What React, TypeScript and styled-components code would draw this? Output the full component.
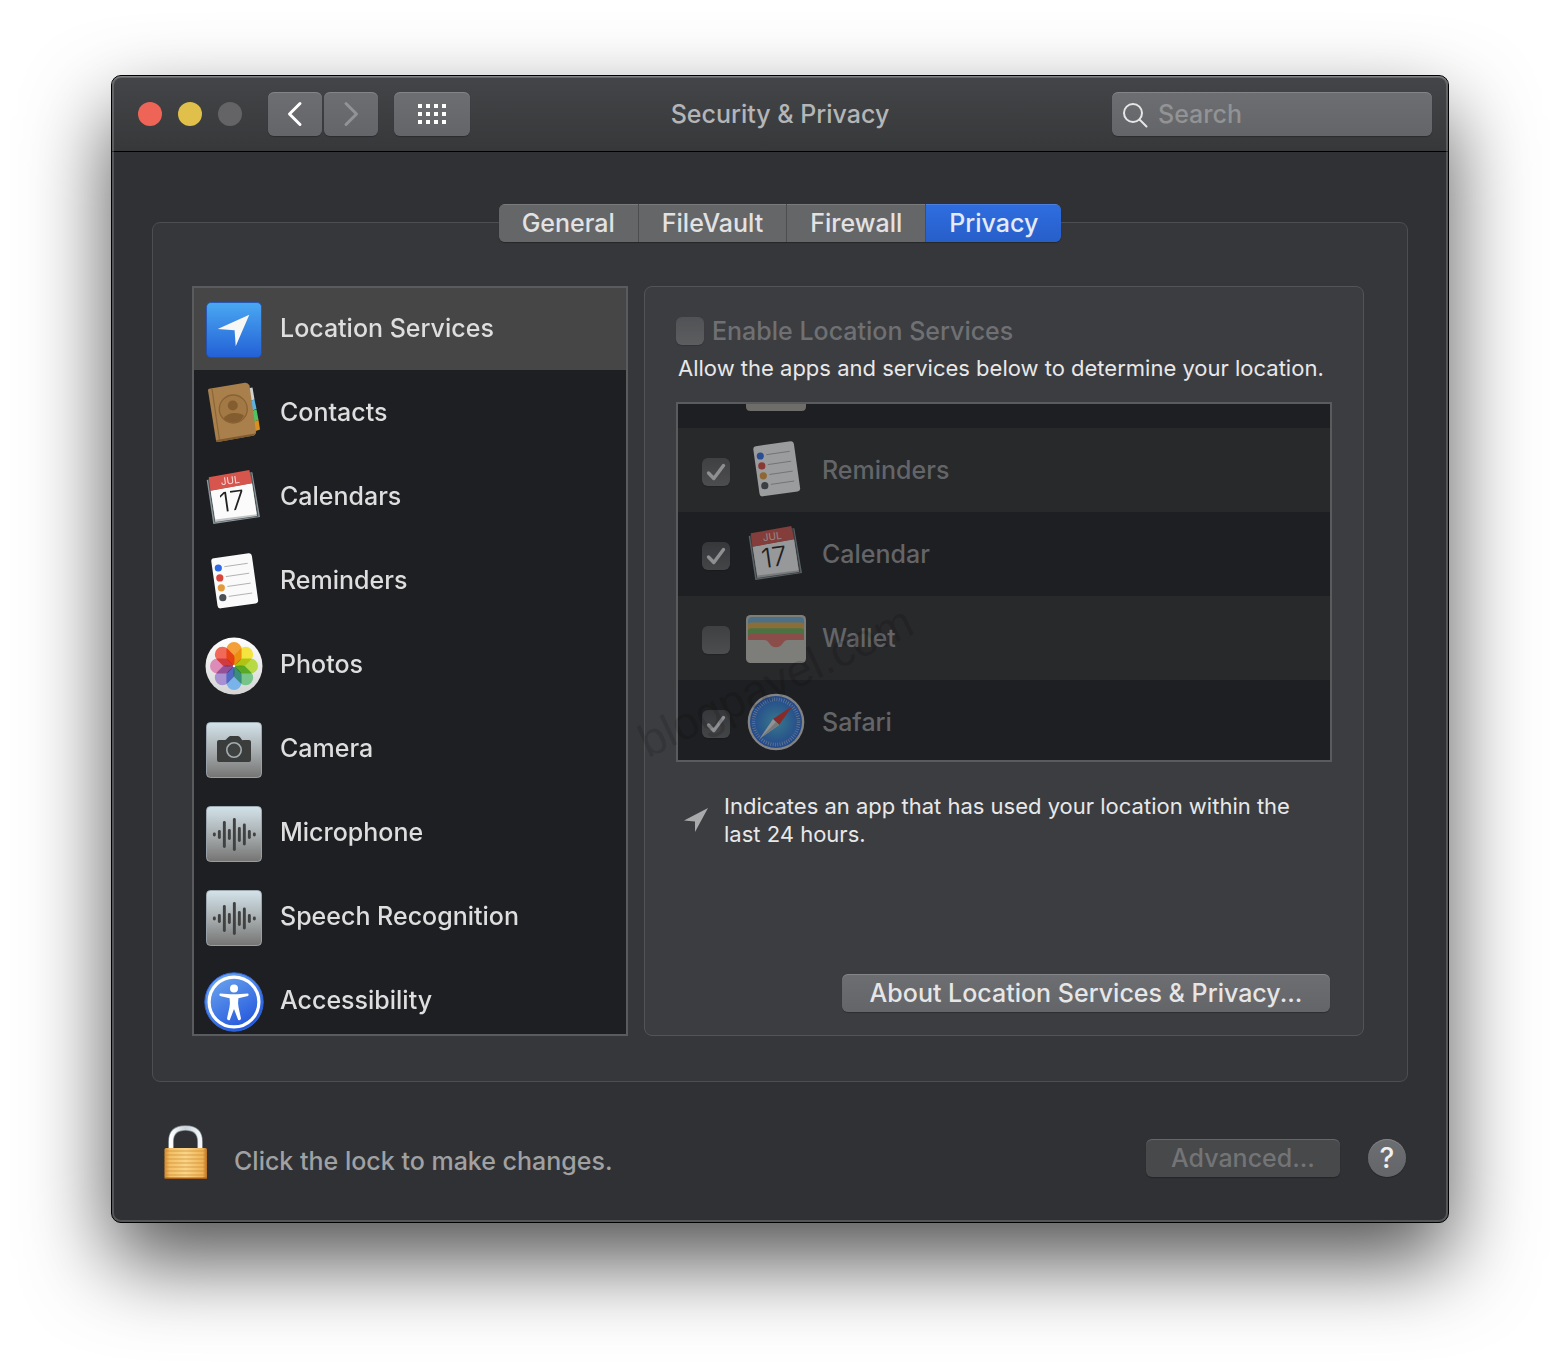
import React, { useState } from "react";
import styled, { createGlobalStyle, css } from "styled-components";

const GlobalStyle = createGlobalStyle`
  *, *::before, *::after { box-sizing: border-box; }
  body {
    margin: 0;
    background: #fff;
    font-family: Inter, "Liberation Sans", sans-serif;
    font-size: 25px;
    font-weight: 450;
    color: #dededf;
  }
  button, input { font: inherit; color: inherit; margin: 0; }
`;

const Desktop = styled.main`
  padding: 75px 111px 147px;
  overflow: hidden;
`;

const Window = styled.div`
  position: relative;
  border: 1px solid #000;
  border-radius: 10px;
  background: #303134;
  box-shadow: 0 38px 84px rgba(0, 0, 0, 0.68);

  &::after {
    content: "";
    position: absolute;
    inset: 0;
    border-radius: 9px;
    box-shadow: inset 0 0 0 2px rgba(255, 255, 255, 0.18), inset 0 1px 0 rgba(255, 255, 255, 0.2);
    pointer-events: none;
  }
`;

const Toolbar = styled.header`
  display: grid;
  grid-template-columns: 1fr auto 1fr;
  align-items: center;
  padding: 16px 16px 15px 26px;
  border-bottom: 1px solid #000;
  border-radius: 9px 9px 0 0;
  background: linear-gradient(#444548, #37383a);
`;

const ToolGroup = styled.div`
  display: flex;
  align-items: center;
  gap: 2px;
`;

const Lights = styled.div`
  display: flex;
  gap: 16px;
  margin-right: 24px;
`;

const Light = styled.button<{ $color: string }>`
  width: 24px;
  height: 24px;
  padding: 0;
  border: 0;
  border-radius: 50%;
  background: ${(p) => p.$color};
`;

const raised = css`
  border: 0;
  border-radius: 6px;
  background: linear-gradient(#6d6e71, #646568);
  box-shadow: inset 0 1px 0 rgba(255, 255, 255, 0.16), 0 1px 1px rgba(0, 0, 0, 0.25);
`;

const ToolButton = styled.button<{ $wide?: boolean }>`
  ${raised}
  display: grid;
  place-items: center;
  width: ${(p) => (p.$wide ? 76 : 54)}px;
  height: 44px;
  padding: 0;
  margin-left: ${(p) => (p.$wide ? 14 : 0)}px;
`;

const Title = styled.h1`
  margin: 0;
  padding-right: 10px;
  font-size: 25px;
  font-weight: 450;
  color: #b4b5b7;
`;

const SearchField = styled.label`
  ${raised}
  justify-self: end;
  display: flex;
  align-items: center;
  gap: 8px;
  width: 320px;
  height: 44px;
  padding: 0 10px;
`;

const SearchInput = styled.input`
  flex: 1;
  min-width: 0;
  padding: 0;
  border: 0;
  outline: 0;
  background: none;
  &::placeholder { color: #929395; opacity: 1; }
`;

const Content = styled.div`
  display: flex;
  flex-direction: column;
  padding: 52px 40px 40px;
`;

const Tabs = styled.div`
  position: relative;
  align-self: center;
  display: flex;
  gap: 1px;
  margin-bottom: -20px;
  border-radius: 6px;
  overflow: hidden;
  background: #4c4d4f;
  box-shadow: 0 1px 1px rgba(0, 0, 0, 0.3);
`;

const Tab = styled.button<{ $active: boolean }>`
  height: 38px;
  padding: 0 23px;
  border: 0;
  line-height: 36px;
  background: ${(p) => (p.$active ? "linear-gradient(#2f6de0, #275fc9)" : "#656668")};
  box-shadow: inset 0 1px 0 rgba(255, 255, 255, 0.14);
  color: ${(p) => (p.$active ? "#e4eaf6" : "#e2e2e3")};
`;

const GroupBox = styled.section`
  display: flex;
  gap: 16px;
  padding: 63px 43px 45px 39px;
  border: 1px solid #4d4e51;
  border-radius: 8px;
  background: #36373a;
`;

const Sidebar = styled.nav`
  flex: 0 0 436px;
  height: 750px;
  border: 2px solid #5a5b5d;
  background: #1e1f22;
  overflow-y: auto;
  scrollbar-width: none;
`;

const Categories = styled.ul`
  margin: -2px 0 0;
  padding: 0;
  list-style: none;
`;

const Category = styled.button<{ $active: boolean }>`
  display: flex;
  align-items: center;
  gap: 16px;
  width: 100%;
  height: 84px;
  padding: 0 10px;
  border: 0;
  background: ${(p) => (p.$active ? "#464646" : "transparent")};
  text-align: left;
`;

const Pane = styled.section`
  position: relative;
  flex: 1;
  min-width: 0;
  display: flex;
  flex-direction: column;
  padding: 28px 31px 23px;
  border: 1px solid #535457;
  border-radius: 8px;
  background: #3c3d40;
`;

const EnableRow = styled.label`
  display: flex;
  align-items: center;
  gap: 8px;
  height: 32px;
  color: #6f7073;
`;

const Hint = styled.p`
  margin: 0;
  font-size: 22px;
  font-weight: 400;
  line-height: 28px;
  color: #e8e8e9;
`;

const AllowHint = styled(Hint)`
  margin: 7px 0 20px;
  padding-left: 2px;
  white-space: nowrap;
`;

const CheckFrame = styled.span`
  display: inline-grid;
  flex: none;
  & > * { grid-area: 1 / 1; }
  & > svg { pointer-events: none; }
`;

const CheckInput = styled.input`
  appearance: none;
  width: 28px;
  height: 28px;
  border-radius: 6px;
  background: linear-gradient(rgba(255, 255, 255, 0.11), rgba(255, 255, 255, 0.17));
  box-shadow: 0 1px 1px rgba(0, 0, 0, 0.15);
`;

const AppList = styled.ul`
  height: 360px;
  margin: 0;
  padding: 0;
  border: 2px solid #5a5b5d;
  background: #1e1f22;
  list-style: none;
  overflow: hidden;
`;

const CutRow = styled.li`
  height: 24px;
  padding-left: 68px;
  & > svg { display: block; }
`;

const AppRow = styled.li`
  height: 84px;
  &:nth-child(even) { background: #28292b; }
`;

const AppLabel = styled.label`
  display: flex;
  align-items: center;
  gap: 16px;
  height: 100%;
  padding-left: 24px;
  color: #646568;
  & > svg { opacity: 0.55; }
  & > ${CheckFrame} { padding-top: 4px; }
`;

const Note = styled.div`
  display: flex;
  align-items: center;
  gap: 16px;
  margin-top: 30px;
  padding: 0 8px;
  & > svg { flex: none; }
`;

const PushButton = styled.button<{ $width: number }>`
  ${raised}
  width: ${(p) => p.$width}px;
  height: 38px;
  padding: 0;
  line-height: 36px;
  color: #e6e6e7;
  &:disabled { background: #48494b; color: #737476; }
`;

const PaneActions = styled.div`
  display: flex;
  justify-content: flex-end;
  margin-top: auto;
  padding-right: 2px;
`;

const Watermark = styled.span`
  position: absolute;
  left: -18px;
  top: 366px;
  font-family: "Liberation Sans", Arial, sans-serif;
  font-size: 46px;
  font-weight: 400;
  line-height: 56px;
  color: rgba(0, 0, 0, 0.15);
  transform: rotate(-25deg);
  pointer-events: none;
`;

const Footer = styled.footer`
  display: flex;
  align-items: center;
  margin-top: 42px;
  padding: 0 2px 0 10px;
`;

const LockButton = styled.button`
  display: flex;
  align-items: center;
  gap: 26px;
  padding: 0;
  border: 0;
  background: none;
  color: #a0a1a3;
  & > span { padding-top: 16px; }
`;

const FooterActions = styled.div`
  display: flex;
  align-items: center;
  gap: 28px;
  margin-left: auto;
  padding-top: 10px;
`;

const HelpButton = styled.button`
  ${raised}
  width: 38px;
  height: 38px;
  padding: 0;
  border-radius: 50%;
  font-size: 28px;
  line-height: 38px;
  color: #f0f0f0;
`;

type IconProps = { tall?: boolean };

const Icon = ({ tall, children }: IconProps & { children: React.ReactNode }) => (
  <svg
    width="60"
    height={tall ? 64 : 60}
    viewBox={tall ? "0 -4 60 64" : "0 0 60 60"}
    overflow="visible"
    aria-hidden="true"
  >
    {children}
  </svg>
);

const LocationIcon = (p: IconProps) => (
  <Icon {...p}>
    <defs>
      <linearGradient id="loc" x2="0" y2="1">
        <stop stopColor="#4aa8f2" />
        <stop offset="1" stopColor="#2360d6" />
      </linearGradient>
    </defs>
    <rect x="2.5" y="2.5" width="55" height="55" rx="4.5" fill="url(#loc)" stroke="#1c4fbd" strokeOpacity=".7" />
    <path d="M13.7 29 45.3 14.7 31.7 46.3 30.6 30.3z" fill="#f7f7f5" />
  </Icon>
);

const ContactsIcon = (p: IconProps) => (
  <Icon {...p}>
    <path d="M44 4.200 48.500 3.500 50.500 15.500 46 17z" fill="#cfd1d2" />
    <path d="M46 17 50.500 15.500 52.500 25 47 27z" fill="#5ab3e0" />
    <path d="M47 27 52.500 25.500 54.500 36 48 38z" fill="#53c262" />
    <path d="M48 38 54.500 36 56 45.500 49 48z" fill="#d9921f" />
    <path d="M5 4.800 41 -1.200Q44 -1.500 45.500 1.500L52 48Q52 50.800 50 51.600L14 58Q12.300 58.200 12 56.500L4 6.500Q4 5 5 4.800z" fill="#a97f4c" />
    <path d="M12.500 56 51 49.500 50 51.600 14 58Q12.400 58.200 12 56.500z" fill="#7f5b2e" />
    <path d="M8 5 15.500 56" stroke="#8c6636" strokeWidth="1.200" fill="none" />
    <circle cx="29.300" cy="25" r="14" fill="#a27944" stroke="#896233" strokeWidth="1.300" />
    <circle cx="28.800" cy="21.500" r="5" fill="#835d2f" />
    <path d="M19.500 34.500Q23 29.500 29.500 29T40 31.800Q36.500 38.600 29.500 38.600 23.500 38.500 19.500 34.500z" fill="#835d2f" />
  </Icon>
);

const CalendarIcon = (p: IconProps) => (
  <Icon {...p}>
    <path d="M2.700 12 48.300 4.300 56 49 9.300 56z" fill="#8d999e" />
    <path d="M4 12 47.500 5 54.500 48.500 10.500 54.500z" fill="#4c5559" />
    <path d="M6.700 22.700 48 15.300 53 48 11.300 54z" fill="#c4c6c6" />
    <path d="M6.700 22.700 48 15.300 52.700 46.300 11.300 51.500z" fill="#fbfbfb" />
    <path d="M4.700 9.300 45.300 2 48.200 15.300 6.500 22.700z" fill="#d6564e" />
    <g transform="rotate(-8 28 29)" textAnchor="middle" fontFamily='Inter, "Liberation Sans", sans-serif'>
      <text x="28.500" y="16" fontSize="10" fontWeight="400" fill="#f8dedb">JUL</text>
      <text x="27.500" y="42.500" fontSize="27" fontWeight="300" fill="#222">17</text>
    </g>
  </Icon>
);

const RemindersIcon = (p: IconProps) => (
  <Icon {...p}>
    <rect x="10.200" y="3.600" width="41" height="50.600" rx="3" fill="#fafafa" transform="rotate(-8 30.300 28.800)" />
    {["#2d6ae8", "#d9453a", "#e29a3c", "#4b5058"].map((c, i) => (
      <g key={c} transform={`translate(${i * 1.5} ${i * 9.9})`}>
        <circle cx="14.300" cy="16" r="3.600" fill={c} />
        <path d="M20.300 14.700 43.700 11.300" stroke="#a9a9a9" strokeWidth=".9" />
      </g>
    ))}
  </Icon>
);

const petals = ["#f39a2c", "#f4e234", "#b4d838", "#71c284", "#74b0ea", "#a58bd0", "#dc86b5", "#f0604f"];

const PhotosIcon = (p: IconProps) => (
  <Icon {...p}>
    <defs>
      <linearGradient id="photoDisc" x2="0" y2="1">
        <stop stopColor="#fff" />
        <stop offset="1" stopColor="#d4d4d4" />
      </linearGradient>
    </defs>
    <circle cx="30" cy="30" r="28.500" fill="url(#photoDisc)" />
    <g style={{ isolation: "isolate" }}>
      {petals.map((c, i) => (
        <path
          key={c}
          d="M22.400 13.600A7.600 7.600 0 0 1 37.600 13.600V22Q37.400 24 30 30 22.600 24 22.400 22z"
          fill={c}
          fillOpacity=".94"
          transform={`rotate(${i * 45} 30 30)`}
          style={{ mixBlendMode: "multiply" }}
        />
      ))}
    </g>
    <circle cx="30" cy="30" r="1.200" fill="#fff" />
  </Icon>
);

const SilverPlate = ({ id }: { id: string }) => (
  <>
    <defs>
      <linearGradient id={id} x2="0" y2="1">
        <stop stopColor="#d3e3ea" />
        <stop offset=".5" stopColor="#a9afb1" />
        <stop offset="1" stopColor="#757473" />
      </linearGradient>
    </defs>
    <rect x="2.500" y="2.500" width="55" height="55" rx="4" fill={`url(#${id})`} stroke="#a7b3bb" strokeOpacity=".8" />
  </>
);

const CameraIcon = (p: IconProps) => (
  <Icon {...p}>
    <SilverPlate id="plateCam" />
    <path d="M15 20H20.500Q22 20 23 18.500T26 16H34Q35.800 16 37 18.500T39.500 20H45Q47 20 47 22V40Q47 42 45 42H15Q13 42 13 40V22Q13 20 15 20z" fill="#3b3c3c" />
    <circle cx="30" cy="30" r="7.200" fill="#3f4040" stroke="#a3adb1" strokeWidth="1.600" />
  </Icon>
);

const bars = [4, 9, 27, 11, 33, 15, 22, 9, 4];

const WaveIcon = ({ id, ...p }: IconProps & { id: string }) => (
  <Icon {...p}>
    <SilverPlate id={id} />
    {bars.map((h, i) => (
      <rect key={i} x={8.9 + i * 5} y={30.5 - h / 2} width="2.900" height={h} rx="1.400" fill="#404141" />
    ))}
  </Icon>
);

const AccessibilityIcon = (p: IconProps) => (
  <Icon {...p}>
    <defs>
      <linearGradient id="acc" x2=".6" y2="1">
        <stop stopColor="#74aff0" />
        <stop offset="1" stopColor="#2458dd" />
      </linearGradient>
    </defs>
    <circle cx="30" cy="30" r="29.200" fill="url(#acc)" stroke="#2f66dc" />
    <circle cx="30" cy="30" r="24.900" fill="none" stroke="#fff" strokeWidth="3.200" />
    <circle cx="30" cy="16.400" r="4" fill="#fff" />
    <path d="M16 21.400Q14.500 22.500 16 24L25.600 26.200Q26.300 31 25.500 35L23 46.500Q23.500 49 25.800 48L30 37 34.200 48Q36.500 49 37 46.500L34.500 35Q33.700 31 34.400 26.200L44 24Q45.500 22.500 44 21.400L33 22.200H27z" fill="#fff" />
  </Icon>
);

const WalletIcon = (p: IconProps) => (
  <Icon {...p}>
    <rect y="7" width="60" height="48" rx="4.500" fill="#c4c2bb" />
    <path d="M2 13Q2 9 6 9H54Q58 9 58 13V32H2z" fill="#6aaad0" />
    <path d="M2 17Q2 14.500 5 14.500H55Q58 14.500 58 17V32H2z" fill="#dda545" />
    <path d="M2 23Q2 20.200 5 20.200H55Q58 20.200 58 23V32H2z" fill="#69ae55" />
    <path d="M2 29Q2 26 5 26H55Q58 26 58 29V32H42Q38.500 32 37 35 34.500 39.200 30 39.200T23 35Q21.500 32 18 32H2z" fill="#db6c62" />
  </Icon>
);

const SafariIcon = (p: IconProps) => (
  <Icon {...p}>
    <defs>
      <radialGradient id="safari">
        <stop stopColor="#4cc0e4" />
        <stop offset="1" stopColor="#2a6be0" />
      </radialGradient>
    </defs>
    <circle cx="30" cy="30" r="28.300" fill="#d5d5d2" />
    <circle cx="30" cy="30" r="26" fill="url(#safari)" />
    <circle cx="30" cy="30" r="22.600" fill="none" stroke="#cfe4f4" strokeOpacity=".75" strokeWidth="3.600" strokeDasharray=".7 1.665" />
    <path d="M46.700 13.700 33 33 27 27z" fill="#e0342c" />
    <path d="M14 46.300 27 27 33 33z" fill="#f2f2f2" />
    <path d="M14 46.300 30 30 33 33z" fill="#c2c2c2" />
  </Icon>
);

const LockIcon = () => (
  <svg width="46" height="58" viewBox="0 0 46 58" aria-hidden="true">
    <defs>
      <linearGradient id="shackle">
        <stop stopColor="#fff" />
        <stop offset=".5" stopColor="#c9d1d8" />
        <stop offset="1" stopColor="#f4f7f9" />
      </linearGradient>
      <linearGradient id="brass">
        <stop stopColor="#d58a31" />
        <stop offset=".12" stopColor="#f2bf64" />
        <stop offset=".5" stopColor="#f9d587" />
        <stop offset=".9" stopColor="#efb558" />
        <stop offset="1" stopColor="#b9701f" />
      </linearGradient>
    </defs>
    <path d="M9 26V17.500Q9 4 23.500 4T38 17.500V26" fill="none" stroke="#7e8990" strokeWidth="5.600" />
    <path d="M9 26V17.500Q9 4 23.500 4T38 17.500V26" fill="none" stroke="url(#shackle)" strokeWidth="4.200" />
    <rect x="2.500" y="24" width="42.500" height="31" rx="1.500" fill="url(#brass)" />
    {[27, 31, 35, 39, 43, 47, 51].map((y) => (
      <path key={y} d={`M2.500 ${y}H45`} stroke="#cb8532" strokeOpacity=".65" strokeWidth="1.200" />
    ))}
    <path d="M3 54.300H44.500" stroke="#a35c17" strokeWidth="1.400" />
  </svg>
);

const Checkbox = ({ id, checked }: { id: string; checked: boolean }) => (
  <CheckFrame>
    <CheckInput type="checkbox" id={id} defaultChecked={checked} disabled />
    {checked && (
      <svg width="28" height="28" viewBox="0 0 28 28" aria-hidden="true">
        <path d="M6.500 15 11.800 20.500 21.500 7.500" fill="none" stroke="#8e8f91" strokeWidth="3.400" strokeLinecap="round" strokeLinejoin="round" />
      </svg>
    )}
  </CheckFrame>
);

const categories = [
  { name: "Location Services", icon: <LocationIcon tall /> },
  { name: "Contacts", icon: <ContactsIcon tall /> },
  { name: "Calendars", icon: <CalendarIcon tall /> },
  { name: "Reminders", icon: <RemindersIcon tall /> },
  { name: "Photos", icon: <PhotosIcon tall /> },
  { name: "Camera", icon: <CameraIcon tall /> },
  { name: "Microphone", icon: <WaveIcon id="plateMic" tall /> },
  { name: "Speech Recognition", icon: <WaveIcon id="plateSpeech" tall /> },
  { name: "Accessibility", icon: <AccessibilityIcon tall /> },
];

const apps = [
  { name: "Reminders", icon: <RemindersIcon />, checked: true },
  { name: "Calendar", icon: <CalendarIcon />, checked: true },
  { name: "Wallet", icon: <WalletIcon />, checked: false },
  { name: "Safari", icon: <SafariIcon />, checked: true },
];

const tabs = ["General", "FileVault", "Firewall", "Privacy"];

export default function App() {
  const [tab, setTab] = useState("Privacy");
  const [category, setCategory] = useState("Location Services");

  return (
    <>
      <GlobalStyle />
      <Desktop>
        <Window>
          <Toolbar>
            <ToolGroup>
              <Lights>
                <Light $color="#ee6558" aria-label="Close" />
                <Light $color="#e0c04b" aria-label="Minimize" />
                <Light $color="#646466" aria-label="Zoom" />
              </Lights>
              <ToolButton aria-label="Back">
                <svg width="16" height="26" viewBox="0 0 16 26" fill="none" stroke="#fff" strokeWidth="3" strokeLinecap="round" strokeLinejoin="round">
                  <path d="M13 2.500 2.500 13 13 23.500" />
                </svg>
              </ToolButton>
              <ToolButton aria-label="Forward">
                <svg width="16" height="26" viewBox="0 0 16 26" fill="none" stroke="#929395" strokeWidth="3" strokeLinecap="round" strokeLinejoin="round">
                  <path d="M3 2.500 13.500 13 3 23.500" />
                </svg>
              </ToolButton>
              <ToolButton $wide aria-label="Show all">
                <svg width="28" height="20" viewBox="0 0 28 20" fill="#fff">
                  {[0, 8, 16].map((y) => [0, 8, 16, 24].map((x) => <rect key={`${x}-${y}`} x={x} y={y} width="4" height="4" />))}
                </svg>
              </ToolButton>
            </ToolGroup>
            <Title>Security &amp; Privacy</Title>
            <SearchField>
              <svg width="28" height="28" viewBox="0 0 28 28" fill="none" stroke="#e6e6e7" strokeWidth="2" strokeLinecap="round" aria-hidden="true">
                <circle cx="11" cy="13" r="9" />
                <path d="M17.500 19.500 24.500 26.500" />
              </svg>
              <SearchInput type="text" placeholder="Search" aria-label="Search" />
            </SearchField>
          </Toolbar>

          <Content>
            <Tabs role="tablist">
              {tabs.map((t) => (
                <Tab key={t} role="tab" aria-selected={t === tab} $active={t === tab} onClick={() => setTab(t)}>
                  {t}
                </Tab>
              ))}
            </Tabs>

            <GroupBox>
              <Sidebar>
                <Categories>
                  {categories.map((c) => (
                    <li key={c.name}>
                      <Category $active={c.name === category} onClick={() => setCategory(c.name)}>
                        {c.icon}
                        {c.name}
                      </Category>
                    </li>
                  ))}
                </Categories>
              </Sidebar>

              <Pane>
                <EnableRow htmlFor="enable">
                  <Checkbox id="enable" checked={false} />
                  Enable Location Services
                </EnableRow>
                <AllowHint>Allow the apps and services below to determine your location.</AllowHint>
                <AppList>
                  <CutRow>
                    <svg width="60" height="7" viewBox="0 0 60 7" aria-hidden="true">
                      <path d="M0 0H60V2.500Q60 7 55.500 7H4.500Q0 7 0 2.500z" fill="#6e6d69" />
                    </svg>
                  </CutRow>
                  {apps.map((a) => (
                    <AppRow key={a.name}>
                      <AppLabel htmlFor={`app-${a.name}`}>
                        <Checkbox id={`app-${a.name}`} checked={a.checked} />
                        {a.icon}
                        {a.name}
                      </AppLabel>
                    </AppRow>
                  ))}
                </AppList>
                <Note>
                  <svg width="24" height="24" viewBox="0 0 24 24" aria-hidden="true">
                    <path d="M0 12.500 24 0 11 24V13.500z" fill="#a9aaab" />
                  </svg>
                  <Hint>Indicates an app that has used your location within the last 24 hours.</Hint>
                </Note>
                <PaneActions>
                  <PushButton $width={488}>About Location Services &amp; Privacy...</PushButton>
                </PaneActions>
                <Watermark>blogpavel.com</Watermark>
              </Pane>
            </GroupBox>

            <Footer>
              <LockButton>
                <LockIcon />
                <span>Click the lock to make changes.</span>
              </LockButton>
              <FooterActions>
                <PushButton $width={194} disabled>
                  Advanced...
                </PushButton>
                <HelpButton aria-label="Help">?</HelpButton>
              </FooterActions>
            </Footer>
          </Content>
        </Window>
      </Desktop>
    </>
  );
}
